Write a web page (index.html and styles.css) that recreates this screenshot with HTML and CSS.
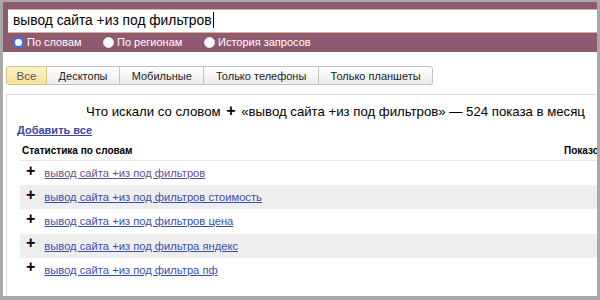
FILE: index.html
```html
<!DOCTYPE html>
<html lang="ru">
<head>
  <meta charset="UTF-8">
  <title>Подбор слов</title>
  <link rel="stylesheet" href="styles.css">
</head>
<body>
  <div class="frame">
    <div class="search-bar">
      <div class="search-input">вывод сайта +из под фильтров<span class="caret"></span></div>
      <div class="scope">
        <label class="scope-item"><span class="radio checked"></span>По словам</label>
        <label class="scope-item"><span class="radio"></span>По регионам</label>
        <label class="scope-item"><span class="radio"></span>История запросов</label>
      </div>
    </div>
    <div class="tabs">
      <span class="tab active">Все</span>
      <span class="tab">Десктопы</span>
      <span class="tab">Мобильные</span>
      <span class="tab">Только телефоны</span>
      <span class="tab">Только планшеты</span>
    </div>
    <div class="panel">
      <div class="summary">Что искали со словом <b class="plus">+</b> «вывод сайта +из под фильтров» — 524 показа в месяц</div>
      <a class="add-all" href="#">Добавить все</a>
      <div class="table">
        <div class="table-head">
          <span>Статистика по словам</span>
          <span>Показов</span>
        </div>
        <div class="row"><b class="plus">+</b><a class="visited" href="#">вывод сайта +из под фильтров</a></div>
        <div class="row alt"><b class="plus">+</b><a href="#">вывод сайта +из под фильтров стоимость</a></div>
        <div class="row"><b class="plus">+</b><a href="#">вывод сайта +из под фильтров цена</a></div>
        <div class="row alt"><b class="plus">+</b><a href="#">вывод сайта +из под фильтра яндекс</a></div>
        <div class="row"><b class="plus">+</b><a href="#">вывод сайта +из под фильтра пф</a></div>
      </div>
    </div>
  </div>
</body>
</html>
```
FILE: styles.css
```css
body { margin: 0; background: #fff; font-family: "Liberation Sans", Arial, sans-serif; color: #000; }
.frame { width: 600px; height: 300px; box-sizing: border-box; border: 3px solid #a9a9a9; border-top-width: 2px; border-bottom-width: 4px; overflow: hidden; background: #fff; }
.search-bar { background: #8f5a71; padding: 7px 0 0 5px; height: 50px; box-sizing: border-box; }
.search-input { background: #fff; height: 24px; box-sizing: border-box; border-top: 1px solid #d7b49a; border-bottom: 1px solid #d7b49a; font-size: 13.8px; line-height: 22px; padding-left: 5px; white-space: nowrap; }
.search-input .caret { display: inline-block; width: 1px; height: 16px; background: #000; vertical-align: -3px; margin-left: 1px; }
.scope { display: flex; height: 18px; align-items: center; color: #fff; font-size: 11px; padding-left: 5px; }
.scope-item { display: flex; align-items: center; gap: 3px; }
.scope-item:nth-child(1) { width: 90px; }
.scope-item:nth-child(2) { width: 101px; }
.radio { width: 9px; height: 9px; border-radius: 50%; background: #fff; border: 1px solid #e8e8e8; }
.radio.checked { background: #fff; border: 2px solid #2d7be0; width: 7px; height: 7px; }
.tabs { display: flex; margin: 14px 0 0 3px; }
.tab { font-size: 11px; height: 19px; line-height: 18px; box-sizing: border-box; padding: 0 11.6px; border: 1px solid #c4c4c4; border-left: none; background: linear-gradient(#ffffff, #ececec); color: #222; }
.tab:first-child { border-left: 1px solid #c4c4c4; border-radius: 3px 0 0 3px; width: 41px; text-align: center; padding: 0; font-size: 11.5px; }
.tab:last-child { border-radius: 0 3px 3px 0; }
.tab.active { background: linear-gradient(#fdf3c8, #f6e19a); border-color: #d8c27f; color: #555; }
.panel { margin: 9px 0 0 3px; border: 1px solid #dcdcdc; border-right: none; height: 199px; padding: 7px 0 0 10px; }
.summary { font-size: 13.2px; padding-left: 69px; white-space: nowrap; line-height: 17px; }
.plus { font-weight: bold; font-size: 16px; }
.summary .plus { margin: 0 2px; }
.add-all { display: inline-block; margin-top: 4px; font-size: 11px; line-height: 13px; font-weight: bold; color: #3b47a3; }
.table { margin: 0 0 0 3px; }
.table-head { display: flex; justify-content: space-between; font-size: 10px; font-weight: bold; height: 23px; line-height: 16px; padding: 5px 0 0 2px; border-bottom: 1px solid #e6e6e6; box-sizing: border-box; white-space: nowrap; margin-right: -8px; }
.row { display: flex; align-items: center; height: 24.2px; padding-left: 6px; gap: 9px; font-size: 11.2px; }
.row.alt { background: #eeeeee; }
.row .plus { font-size: 16px; line-height: 16px; margin-top: -5px; }
.row a { color: #3b4db0; }
.row a.visited { color: #6a4f8e; }
```
